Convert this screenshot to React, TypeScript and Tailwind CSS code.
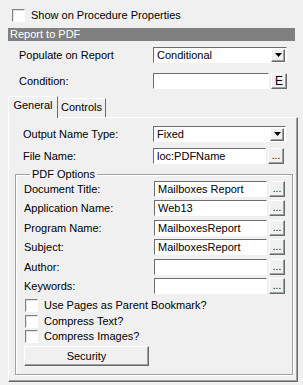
import * as React from 'react';

const Sunken: React.FC<{ className?: string; children?: React.ReactNode }> = ({ className = '', children }) => (
  <div
    className={`flex items-center overflow-hidden border border-t-[#6d6d6d] border-l-[#6d6d6d] border-r-white border-b-white bg-white pl-[3px] text-black ${className}`}
  >
    {children}
  </div>
);

const Raised: React.FC<{ className?: string; children?: React.ReactNode }> = ({ className = '', children }) => (
  <div
    className={`flex items-center justify-center border border-t-white border-l-white border-r-[#696969] border-b-[#696969] bg-[#f0f0f0] shadow-[inset_-1px_-1px_0_#a0a0a0] text-black ${className}`}
  >
    {children}
  </div>
);

const Dropdown: React.FC<{ value: string; width: string }> = ({ value, width }) => (
  <Sunken className={`h-[16px] ${width} pr-[1px]`}>
    <span className="flex-1 leading-none">{value}</span>
    <Raised className="h-[13px] w-[14px]">
      <svg width="7" height="4" viewBox="0 0 7 4">
        <path d="M0 0h7L3.5 4z" fill="#000" />
      </svg>
    </Raised>
  </Sunken>
);

const Dots = () => (
  <Raised className="h-[16px] w-[16px] items-end pb-[2px] text-[10px] leading-none">...</Raised>
);

const Check: React.FC<{ label: string }> = ({ label }) => (
  <div className="flex h-[13px] items-center gap-[6px]">
    <div className="h-[13px] w-[13px] border border-t-[#808080] border-l-[#808080] border-r-white border-b-white bg-white shadow-[inset_1px_1px_0_#e3e3e3]" />
    <span className="leading-none">{label}</span>
  </div>
);

const FieldRow: React.FC<{ label: string; value?: string }> = ({ label, value = '' }) => (
  <div className="flex h-[16px] items-center">
    <span className="w-[130px] leading-none">{label}</span>
    <Sunken className="h-[16px] w-[113px]">
      <span className="leading-none">{value}</span>
    </Sunken>
    <div className="ml-[2px]">
      <Dots />
    </div>
  </div>
);

export default function App() {
  return (
    <div className="h-[385px] w-[303px] overflow-hidden bg-[#f0f0f0] font-['Liberation_Sans',Arial,sans-serif] text-[11px] text-black">
      {/* Top checkbox */}
      <div className="pl-[12px] pt-[9px]">
        <Check label="Show on Procedure Properties" />
      </div>

      {/* Section header */}
      <div className="mx-[8px] mt-[6px] flex h-[13px] items-center bg-[#808080] pl-[2px] leading-none text-white">
        Report to PDF
      </div>

      {/* Populate on Report */}
      <div className="mt-[6px] flex h-[16px] items-center pl-[19px]">
        <span className="w-[134px] leading-none">Populate on Report</span>
        <Dropdown value="Conditional" width="w-[134px]" />
      </div>

      {/* Condition */}
      <div className="mt-[10px] flex h-[16px] items-center pl-[19px]">
        <span className="w-[134px] leading-none">Condition:</span>
        <Sunken className="h-[16px] w-[116px]" />
        <Raised className="ml-[2px] h-[16px] w-[16px] text-[12px] leading-none">E</Raised>
      </div>

      {/* Tabs */}
      <div className="ml-[8px] mt-[7px] flex items-end">
        <div className="relative z-10 -mb-px flex h-[22px] w-[50px] items-start justify-center border border-b-0 border-t-white border-l-white border-r-[#696969] bg-[#f0f0f0] pt-[3px] leading-none">
          General
        </div>
        <div className="flex h-[19px] w-[48px] items-start justify-center border-t border-r border-t-white border-r-[#696969] pt-[3px] leading-none">
          Controls
        </div>
      </div>

      {/* Tab panel */}
      <div className="mx-[5px] ml-[8px] h-[265px] w-[290px] border border-t-white border-l-white border-r-[#696969] border-b-[#696969] shadow-[inset_-1px_-1px_0_#a0a0a0] pl-[14px] pt-[8px]">
        <div className="flex h-[16px] items-center">
          <span className="w-[130px] leading-none">Output Name Type:</span>
          <Dropdown value="Fixed" width="w-[133px]" />
        </div>
        <div className="mt-[6px] flex h-[16px] items-center">
          <span className="w-[130px] leading-none">File Name:</span>
          <Sunken className="h-[16px] w-[113px]">
            <span className="leading-none">loc:PDFName</span>
          </Sunken>
          <div className="ml-[2px]">
            <Dots />
          </div>
        </div>

        {/* PDF Options group */}
        <fieldset className="-ml-[8px] mt-[4px] h-[207px] w-[278px] border border-[#a0a0a0] pl-[8px] shadow-[1px_1px_0_#fff,inset_1px_1px_0_#fff]">
          <legend className="ml-[6px] px-[2px] leading-[13px]">PDF Options</legend>
          <div className="flex flex-col">
            <FieldRow label="Document Title:" value="Mailboxes Report" />
            <div className="mt-[3px]">
              <FieldRow label="Application Name:" value="Web13" />
            </div>
            <div className="mt-[4px]">
              <FieldRow label="Program Name:" value="MailboxesReport" />
            </div>
            <div className="mt-[3px]">
              <FieldRow label="Subject:" value="MailboxesReport" />
            </div>
            <div className="mt-[4px]">
              <FieldRow label="Author:" />
            </div>
            <div className="mt-[3px]">
              <FieldRow label="Keywords:" />
            </div>
            <div className="ml-[1px] mt-[5px] flex flex-col gap-[2px]">
              <Check label="Use Pages as Parent Bookmark?" />
              <div className="mt-[1px]">
                <Check label="Compress Text?" />
              </div>
              <Check label="Compress Images?" />
            </div>
            <Raised className="mt-[3px] h-[20px] w-[125px] leading-none">Security</Raised>
          </div>
        </fieldset>
      </div>
    </div>
  );
}
